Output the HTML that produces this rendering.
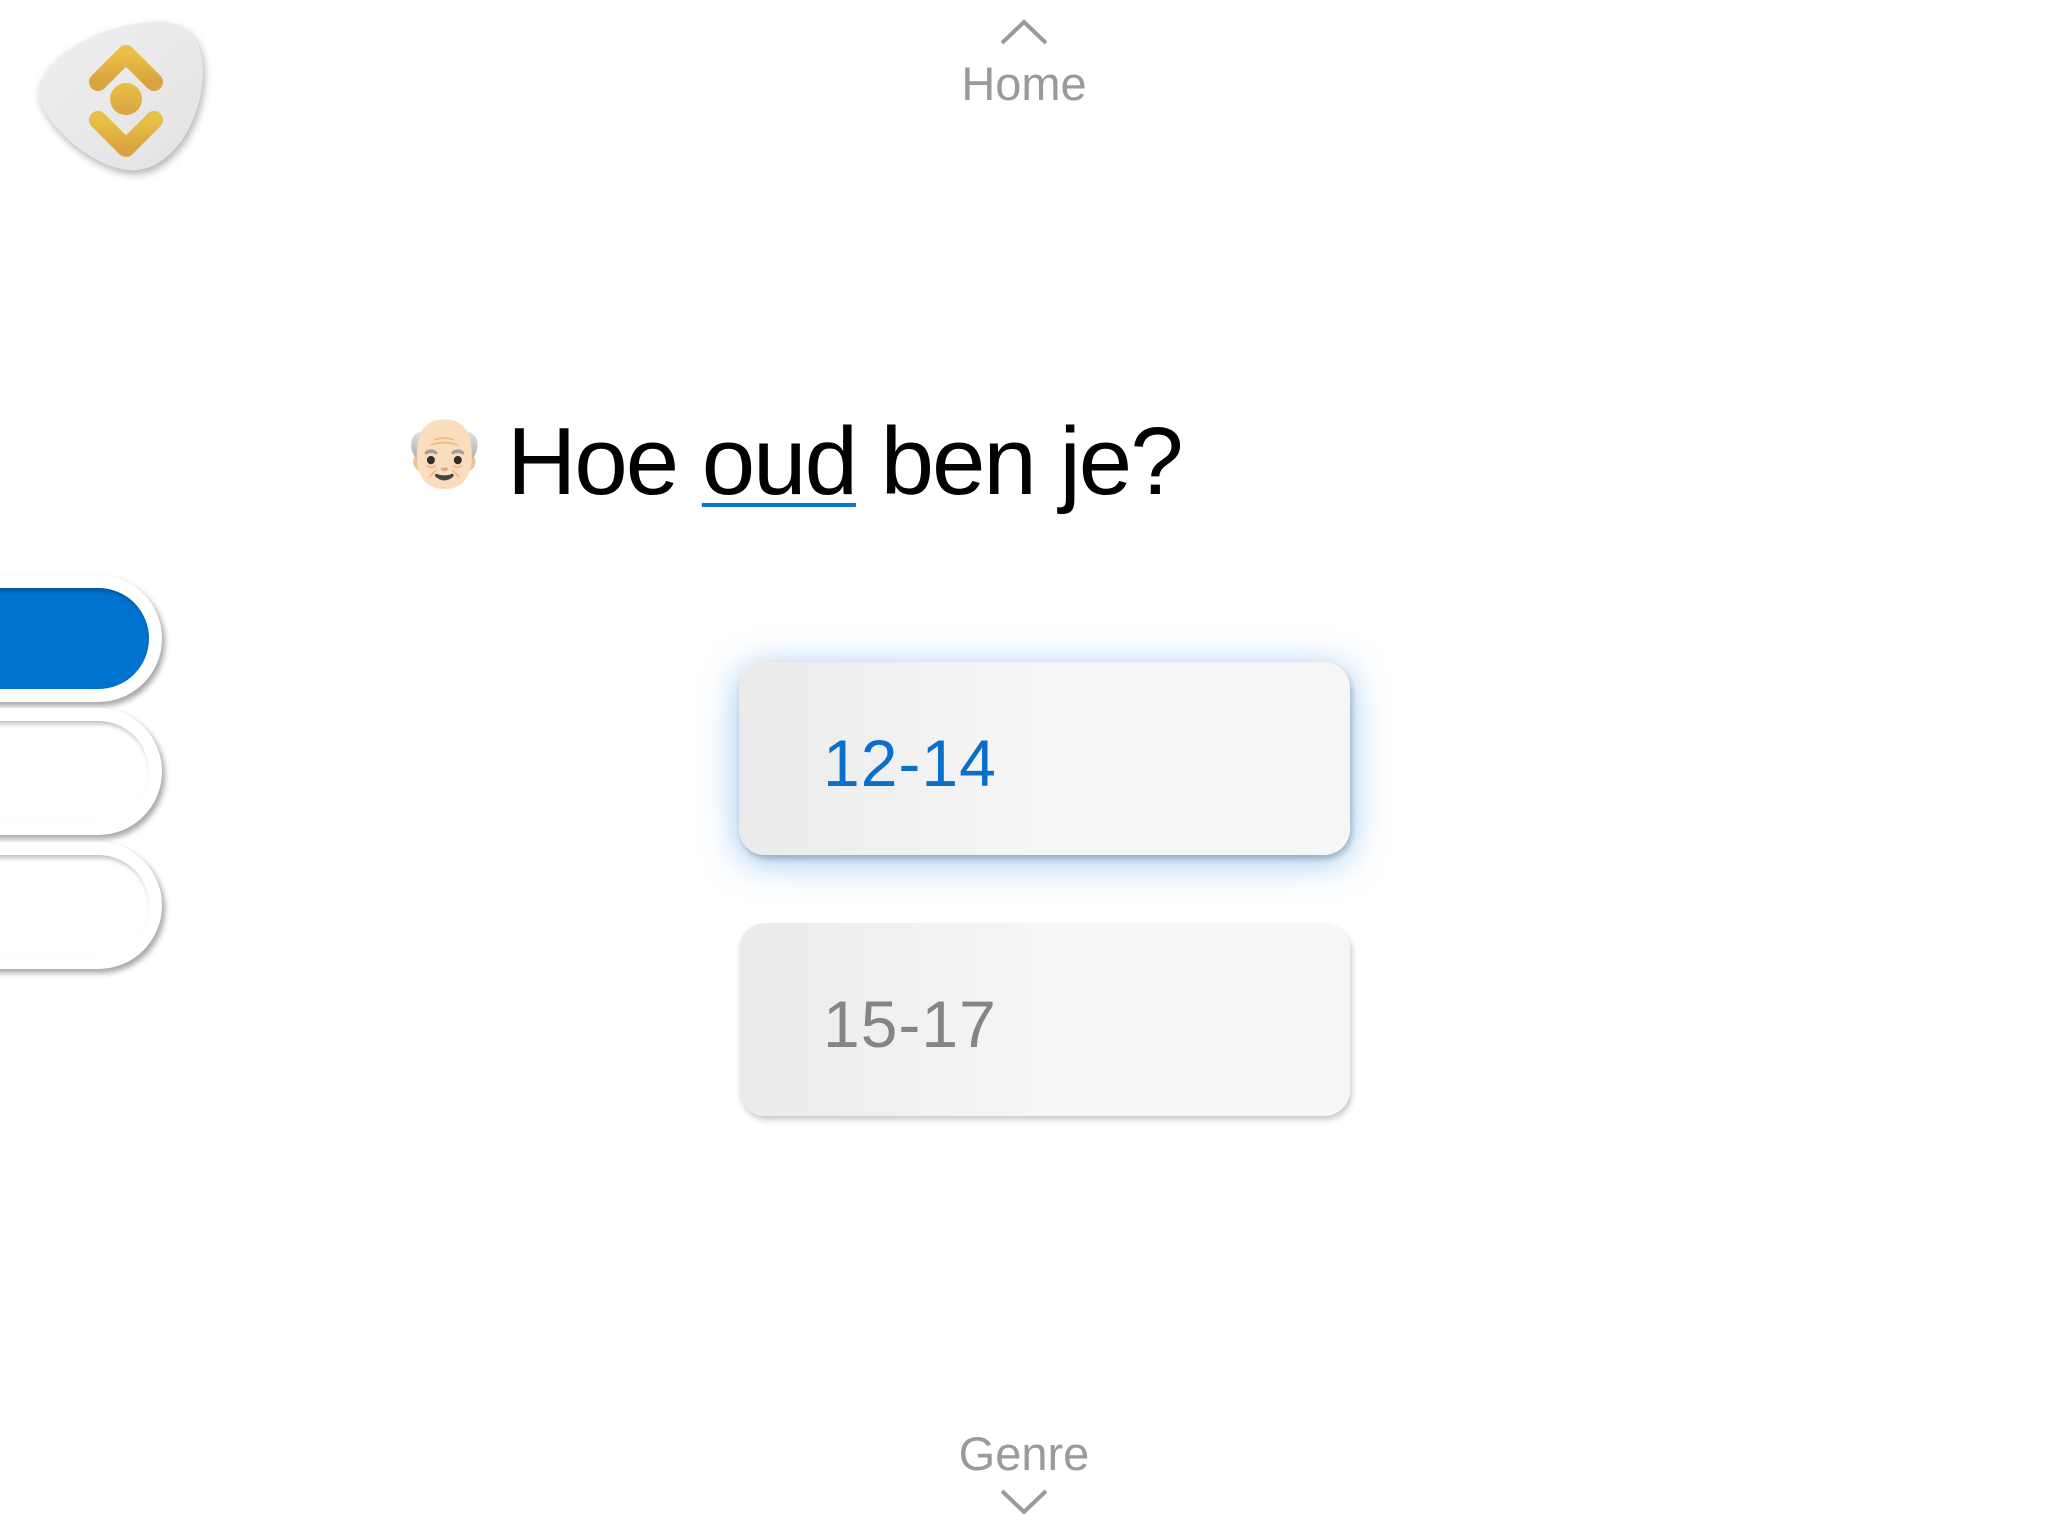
<!DOCTYPE html>
<html><head><meta charset="utf-8"><style>
html,body{margin:0;padding:0;width:2048px;height:1536px;background:#fff;overflow:hidden;font-family:"Liberation Sans",sans-serif;position:relative}
.abs{position:absolute}
.nav{left:0;width:2048px;text-align:center;color:#9a9a9a;font-size:47px;line-height:1}
.pill{left:-80px;width:242px;height:127px;border-radius:64px;background:#fff;box-shadow:3px 4px 6px rgba(0,0,0,.35)}
.pill .in{position:absolute;left:0;top:13px;right:13px;bottom:13px;border-radius:52px;box-shadow:inset 2px 3px 5px rgba(0,0,0,.25)}
.btn{left:739px;width:611px;height:193px;border-radius:26px;background:linear-gradient(90deg,#ebebeb,#f6f6f6 50%);box-shadow:2px 4px 6px rgba(0,0,0,.2)}
.btn span{position:absolute;left:84px;top:68px;font-size:66px;line-height:1;letter-spacing:1px}
</style></head><body>
<svg class="abs" style="left:30px;top:10px" width="190" height="175" viewBox="0 0 190 175">
<defs><linearGradient id="g" x1="0" y1="0" x2="1" y2="1"><stop offset="0" stop-color="#f0f0f0"/><stop offset="1" stop-color="#e2e2e2"/></linearGradient>
<filter id="s"><feDropShadow dx="2" dy="4" stdDeviation="4" flood-opacity=".3"/></filter>
<linearGradient id="y" x1="0" y1="0" x2="0" y2="1"><stop offset="0" stop-color="#e9c046"/><stop offset="1" stop-color="#d9a440"/></linearGradient></defs>
<path d="M130 12 C170 12 180 50 168 95 C155 140 125 162 100 160 C65 158 20 120 10 90 C5 65 25 45 60 28 C85 16 110 12 130 12Z" fill="url(#g)" filter="url(#s)"/>
<path d="M68 72 L96 44 L124 72" fill="none" stroke="url(#y)" stroke-width="18" stroke-linecap="round" stroke-linejoin="round"/>
<circle cx="96" cy="89" r="16" fill="url(#y)"/>
<path d="M68 110 L96 138 L124 110" fill="none" stroke="url(#y)" stroke-width="18" stroke-linecap="round" stroke-linejoin="round"/>
</svg>
<svg class="abs" style="left:999px;top:18px" width="50" height="28"><path d="M3 25 L25 4 L47 25" fill="none" stroke="#9a9a9a" stroke-width="4"/></svg>
<div class="abs nav" style="top:60px">Home</div>
<div class="abs nav" style="top:1430px">Genre</div>
<svg class="abs" style="left:999px;top:1488px" width="50" height="28"><path d="M3 3 L25 24 L47 3" fill="none" stroke="#9a9a9a" stroke-width="4"/></svg>
<div class="abs" style="left:402px;top:418px;font-size:68px;line-height:1;font-family:'Noto Color Emoji','DejaVu Sans',sans-serif">👴🏻</div>
<div class="abs" style="left:507px;top:414px;font-size:96px;line-height:1;color:#000;white-space:nowrap;letter-spacing:-2px">Hoe <span style="text-decoration:underline;text-decoration-color:#0a74d6;text-decoration-thickness:4px;text-underline-offset:9px">oud</span> ben je?</div>
<div class="abs pill" style="top:575px"><div class="in" style="background:#0072cf"></div></div>
<div class="abs pill" style="top:708px"><div class="in"></div></div>
<div class="abs pill" style="top:842px"><div class="in"></div></div>
<div class="abs btn" style="top:662px;box-shadow:2px 4px 6px rgba(0,0,0,.2),0 6px 36px rgba(50,140,225,.5)"><span style="color:#0a6fc8">12-14</span></div>
<div class="abs btn" style="top:923px"><span style="color:#858585">15-17</span></div>
</body></html>
